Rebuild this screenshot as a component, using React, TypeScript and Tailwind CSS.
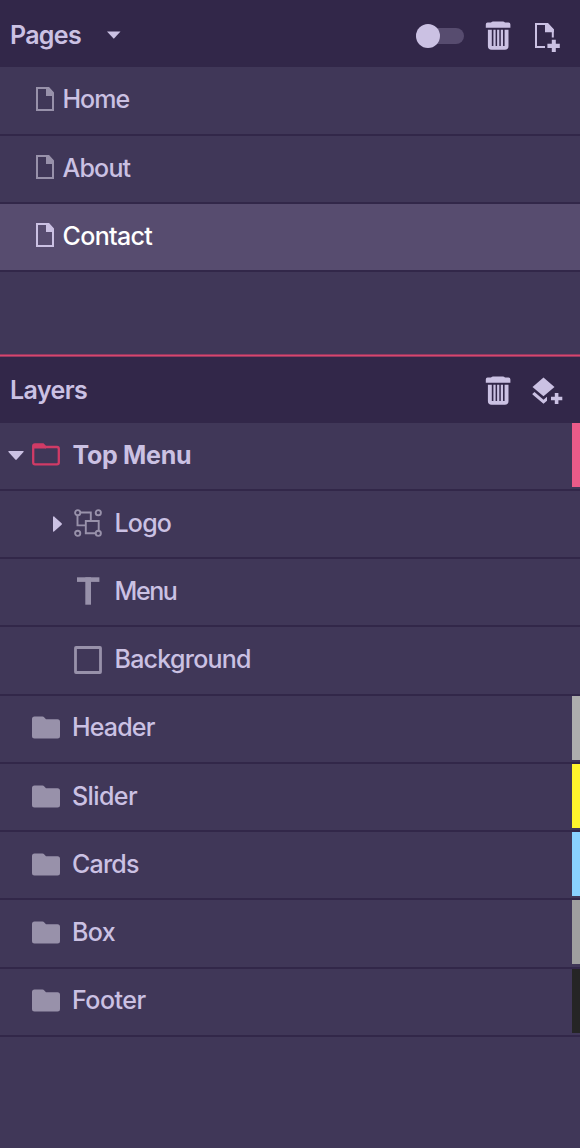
import React from "react";

const INK = "#cbc1e3";
const MUTED = "#9891aa";

function PageIcon({ color }: { color: string }) {
  return (
    <svg width="18" height="25" viewBox="0 0 18 25" fill="none" className="-mt-[2.2px] shrink-0">
      <path d="M1 1H12L17 6.5V23H1Z" stroke={color} strokeWidth="2" />
      <path d="M10 0H13L18 5.6V9H10Z" fill={color} />
    </svg>
  );
}

function TrashIcon() {
  return (
    <svg width="26" height="30" viewBox="0 0 26 30" fill={INK} className="shrink-0">
      <path d="M6 1.6Q7 0.4 8 0.4H18Q19 0.4 20 1.6H23.5Q25.4 1.8 25.4 3.5V6.8H0.8V3.5Q0.8 1.8 2.5 1.6Z" />
      <path d="M2.9 8.7H6.8V25H19.6V8.7H23.5V25Q23.5 28.8 19.8 28.8H6.6Q2.9 28.8 2.9 25Z" />
      <path d="M8.4 8.7H10.6V26H8.4ZM12.1 8.7H14.3V26H12.1ZM15.8 8.7H18V26H15.8Z" />
    </svg>
  );
}

function AddPageIcon() {
  return (
    <svg width="26" height="30" viewBox="0 0 26 30" fill="none" className="shrink-0">
      <path d="M11 24H2V1H12.6L18.8 7V14.5" stroke={INK} strokeWidth="2" />
      <path d="M11 0H14L19.8 6.2V9.2H11Z" fill={INK} />
      <path d="M17.8 16.8H21.8V20.8H25.8V25H21.8V29H17.8V25H13.4V20.8H17.8Z" fill={INK} />
    </svg>
  );
}

function AddLayerIcon() {
  return (
    <svg width="32" height="28" viewBox="0 0 32 28" fill={INK} className="shrink-0">
      <path d="M11.5 0.5L22.5 10L11.5 19.2L0.5 10Z" />
      <path d="M0.5 16.7L2.5 15L11.5 22.8L15 19.8V23.7L11.5 26.7L0.5 17.6Z" />
      <path d="M22.8 16H26.4V19.7H30.3V23.3H26.4V27H22.8V23.3H19V19.7H22.8Z" />
    </svg>
  );
}

function FolderIcon({ open = false }: { open?: boolean }) {
  return open ? (
    <svg width="28" height="23" viewBox="0 0 28 23" className="-mt-[2px] shrink-0">
      <path d="M3 1.4H11L13.7 4H25Q26.8 4 26.8 5.8V19.5Q26.8 21.3 25 21.3H3Q1.2 21.3 1.2 19.5V3.2Q1.2 1.4 3 1.4Z" fill="none" stroke="#d03b66" strokeWidth="2.3" />
      <path d="M2 1.2H11L14 4V5.5H2Z" fill="#d03b66" />
    </svg>
  ) : (
    <svg width="28" height="23" viewBox="0 0 28 23" className="-mt-[2px] shrink-0">
      <path d="M2.5 0.5H10.5Q11.6 0.5 12.3 1.4L14 3.3H25.5Q28 3.3 28 5.8V20Q28 22.5 25.5 22.5H2.5Q0 22.5 0 20V3Q0 0.5 2.5 0.5Z" fill={MUTED} />
    </svg>
  );
}

function GroupIcon() {
  return (
    <svg width="28" height="28" viewBox="0 0 28 28" fill="none" stroke={MUTED} strokeWidth="1.9" className="-mt-[2px] shrink-0">
      <circle cx="3.7" cy="3.7" r="2.6" />
      <circle cx="24.3" cy="3.7" r="2.6" />
      <circle cx="3.7" cy="24.3" r="2.6" />
      <circle cx="24.3" cy="24.3" r="2.6" />
      <path d="M6.4 3.5H16.8V11.7M3.5 6.4V16.4H11.5M21.6 24.3H11.8V12H24.7V21.6" />
    </svg>
  );
}

function TypeIcon() {
  return (
    <svg width="28" height="28" viewBox="0 0 28 28" className="-mt-[2px] shrink-0">
      <rect x="3" y="0.3" width="22.4" height="4.6" fill={MUTED} />
      <rect x="11.3" y="0.3" width="5.7" height="27.4" fill={MUTED} />
    </svg>
  );
}

function SquareIcon() {
  return (
    <svg width="28" height="28" viewBox="0 0 28 28" className="-mt-[1px] shrink-0">
      <rect x="1.5" y="1.5" width="25" height="25" rx="0.5" fill="none" stroke={MUTED} strokeWidth="2.8" />
    </svg>
  );
}

const row = "flex h-[68.25px] shrink-0 border-b-2 border-[#322749]";

function Page({ name, active = false, tracking }: { name: string; active?: boolean; tracking: string }) {
  return (
    <li className={`${row} items-center gap-[9px] pl-9 ${active ? "bg-[#574c6f] text-white" : ""}`}>
      <PageIcon color={active ? INK : MUTED} />
      <span className={`-mt-[2.3px] -ml-[0.5px] ${tracking}`}>{name}</span>
    </li>
  );
}

function Layer({ name, icon, swatch, nested = false, tracking }: { name: string; icon: React.ReactNode; swatch?: string; nested?: boolean; tracking: string }) {
  return (
    <li className={`${row} justify-between`}>
      <div className={`flex items-center ${nested ? "gap-[12.5px] pl-[74px]" : "gap-3 pl-8"}`}>
        {icon}
        <span className={`-mt-[2.8px] ${tracking}`}>{name}</span>
      </div>
      {swatch && <div className={`h-16 w-2 ${swatch}`} />}
    </li>
  );
}

export default function App() {
  return (
    <div className="flex h-[1148px] w-[580px] flex-col overflow-hidden bg-[#403758] font-['Inter',sans-serif] text-[25px] leading-[32px] font-medium text-[#cbc1e3]">
      <header className="flex h-[67.4px] shrink-0 items-center bg-[#322749] pr-[20px] pl-[10px]">
        <h2 className="mt-[3px] w-[97px] font-semibold tracking-[-0.7px]">Pages</h2>
        <svg width="14" height="8" viewBox="0 0 14 8" className="mt-[2px]">
          <path d="M0 0.5H13.5L6.8 7.7Z" fill={INK} />
        </svg>
        <div className="mt-1 ml-auto flex items-center">
          <div className="mr-[21px] flex h-4 w-[48px] items-center rounded-full bg-[#574c6f]">
            <div className="size-6 rounded-full bg-[#cbc1e3]" />
          </div>
          <TrashIcon />
          <div className="ml-[23px] h-[26px]"><AddPageIcon /></div>
        </div>
      </header>
      <ul className="flex h-[286.6px] shrink-0 flex-col">
        <Page name="Home" tracking="tracking-[-1px]" />
        <Page name="About" tracking="tracking-[-0.8px]" />
        <Page name="Contact" active tracking="tracking-[-0.65px]" />
      </ul>
      <div className="h-px shrink-0 bg-[#923b61]" />
      <div className="h-px shrink-0 bg-[#d8456e]" />
      <div className="h-px shrink-0 bg-[#923b61]" />
      <header className="flex h-[65.7px] shrink-0 items-center bg-[#322749] pr-[16px] pl-[10px]">
        <h2 className="mt-[1px] font-semibold tracking-[-0.6px]">Layers</h2>
        <div className="mt-[2px] ml-auto flex items-center gap-[21px]">
          <TrashIcon />
          <AddLayerIcon />
        </div>
      </header>
      <ul className="flex flex-col">
        <li className={`${row} justify-between`}>
          <div className="flex items-center pl-2">
            <svg width="16" height="9" viewBox="0 0 16 9" className="mr-2">
              <path d="M0.8 0H15.2Q16 0.2 15.5 1L8.7 8.6Q8 9.2 7.3 8.6L0.5 1Q0 0.2 0.8 0Z" fill={INK} />
            </svg>
            <FolderIcon open />
            <span className="-mt-[2.5px] ml-[12.5px] font-bold tracking-[-0.3px]">Top Menu</span>
          </div>
          <div className="h-16 w-2 bg-[#ea5b89]" />
        </li>
        <li className={`${row} items-center pl-[53px]`}>
          <svg width="9" height="16" viewBox="0 0 9 16" className="-mt-[1px] mr-3">
            <path d="M0 0.8Q0.2 0 1 0.5L8.6 7.3Q9.2 8 8.6 8.7L1 15.5Q0.2 16 0 15.2Z" fill={INK} />
          </svg>
          <GroupIcon />
          <span className="-mt-[2.5px] ml-[12.5px] tracking-[-0.8px]">Logo</span>
        </li>
        <Layer nested name="Menu" icon={<TypeIcon />} tracking="tracking-[-1.4px]" />
        <Layer nested name="Background" icon={<SquareIcon />} tracking="tracking-[-0.75px]" />
        <Layer name="Header" icon={<FolderIcon />} swatch="bg-[#adadad]" tracking="tracking-[-0.85px]" />
        <Layer name="Slider" icon={<FolderIcon />} swatch="bg-[#fff42c]" tracking="tracking-[-0.6px]" />
        <Layer name="Cards" icon={<FolderIcon />} swatch="bg-[#89d1ff]" tracking="tracking-[-0.8px]" />
        <Layer name="Box" icon={<FolderIcon />} swatch="bg-[#9f9f9f]" tracking="tracking-[-0.6px]" />
        <Layer name="Footer" icon={<FolderIcon />} swatch="bg-[#252525]" tracking="tracking-[-0.5px]" />
      </ul>
    </div>
  );
}
